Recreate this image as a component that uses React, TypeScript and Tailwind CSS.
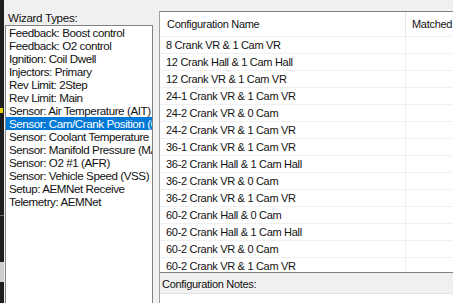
import React from 'react';

const wizardTypes = [
  'Feedback: Boost control',
  'Feedback: O2 control',
  'Ignition: Coil Dwell',
  'Injectors: Primary',
  'Rev Limit: 2Step',
  'Rev Limit: Main',
  'Sensor: Air Temperature (AIT)',
  'Sensor: Cam/Crank Position (Cam/Crank)',
  'Sensor: Coolant Temperature (CLT)',
  'Sensor: Manifold Pressure (MAP)',
  'Sensor: O2 #1 (AFR)',
  'Sensor: Vehicle Speed (VSS)',
  'Setup: AEMNet Receive',
  'Telemetry: AEMNet',
];

const configs = [
  '8 Crank VR & 1 Cam VR',
  '12 Crank Hall & 1 Cam Hall',
  '12 Crank VR & 1 Cam VR',
  '24-1 Crank VR & 1 Cam VR',
  '24-2 Crank VR & 0 Cam',
  '24-2 Crank VR & 1 Cam VR',
  '36-1 Crank VR & 1 Cam VR',
  '36-2 Crank Hall & 1 Cam Hall',
  '36-2 Crank VR & 0 Cam',
  '36-2 Crank VR & 1 Cam VR',
  '60-2 Crank Hall & 0 Cam',
  '60-2 Crank Hall & 1 Cam Hall',
  '60-2 Crank VR & 0 Cam',
  '60-2 Crank VR & 1 Cam VR',
];

const App = () => {
  return (
    <div className="w-[453px] h-[303px] flex bg-[#f0f0f0] overflow-hidden text-[11.6px] tracking-[-0.3px] text-[#111] font-['Liberation_Sans',Arial,sans-serif]">
      {/* dark strip from the window behind */}
      <div className="relative w-[4px] h-full bg-[#1e1e1e] shrink-0">
        <div className="absolute left-0 top-[108px] w-[3px] h-[5px] bg-[#e8d000]" />
        <div className="absolute left-0 top-[215px] w-[4px] h-[1px] bg-[#6a6a6a]" />
        <div className="absolute left-0 top-[262px] w-[4px] h-[20px] bg-[#cfcfcf]" />
      </div>

      {/* Wizard types list */}
      <div className="w-[149px] shrink-0 flex flex-col">
        <div className="h-[25px] pl-[4px] pt-[11px] leading-[13px]">Wizard Types:</div>
        <div className="flex-1 ml-[1px] border border-b-0 border-[#828282] bg-white overflow-hidden tracking-[-0.42px]">
          {wizardTypes.map((t, i) => (
            <div
              key={t}
              className={
                i === 7
                  ? 'h-[13px] leading-[13px] pl-[3px] whitespace-nowrap bg-[#0078d7] text-white'
                  : 'h-[13px] leading-[13px] pl-[3px] whitespace-nowrap'
              }
            >
              {t}
            </div>
          ))}
        </div>
      </div>

      {/* Configuration panel */}
      <div className="ml-[6px] flex-1 flex flex-col pt-[11px]">
        <div className="flex-1 flex flex-col border-l border-[#a0a0a0]">
          <div className="h-[262px] border-t border-b border-[#828282] bg-white overflow-hidden text-[11px]">
            <div className="flex h-[24px] items-center">
              <div className="w-[246px] h-full pl-[7px] flex items-center border-r border-[#e5e5e5]">
                Configuration Name
              </div>
              <div className="pl-[6px] whitespace-nowrap">Matched</div>
            </div>
            {configs.map((c) => (
              <div key={c} className="flex h-[17px] border-t border-[#f0f0f0]">
                <div className="w-[246px] pl-[6px] leading-[16px] whitespace-nowrap border-r border-[#f0f0f0]">
                  {c}
                </div>
                <div className="flex-1" />
              </div>
            ))}
          </div>
          <div className="h-[20px] pl-[2px] pt-[3px] leading-[17px] text-[11px]">Configuration Notes:</div>
          <div className="flex-1 bg-white border-t border-[#e3e3e3]" />
        </div>
      </div>
    </div>
  );
};

export default App;
